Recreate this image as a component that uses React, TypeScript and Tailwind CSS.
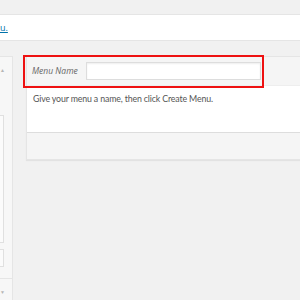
import React from "react";

export default function App() {
  return (
    <div className="relative w-[300px] h-[300px] overflow-hidden bg-[#f1f1f1] font-['Open_Sans',sans-serif] text-[#444]">
      {/* top strip */}
      <div className="h-[15px] border-b border-[#e5e5e5]"></div>
      <div className="h-[26px] bg-white border-b border-[#e5e5e5] flex items-center">
        <span className="text-[9px] text-[#0073aa] underline leading-none">u.</span>
      </div>

      <div className="flex mt-[15px]">
        {/* left panel, cut off */}
        <div className="w-[13px] h-[260px] shrink-0 bg-[#f7f7f7] border-t border-r border-[#e5e5e5] flex flex-col">
          <div className="h-[58px] pt-[11px]">
            <span className="block text-[5px] leading-none text-[#b5b5b5]">▲</span>
          </div>
          <div className="w-[4px] h-[128px] bg-[#fbfbfb] border-t border-r border-b border-[#e0e0e0]"></div>
          <div className="w-[4px] h-[18px] mt-[6px] bg-[#fbfbfb] border-t border-r border-b border-[#e0e0e0]"></div>
          <div className="mt-[11px] border-t border-[#e5e5e5] pt-[11px]">
            <span className="block text-[5px] leading-none text-[#b5b5b5]">▼</span>
          </div>
        </div>

        {/* menu card */}
        <div className="ml-[13px] w-[300px] shrink-0 self-start bg-white border border-[#e5e5e5] shadow-[0_1px_1px_rgba(0,0,0,0.06)]">
          <div className="h-[29px] bg-[#f5f5f5] border-b border-[#eee] flex items-center pl-[5px]">
            <span className="italic text-[8.5px] text-[#666] w-[54px]">Menu Name</span>
            <div className="w-[175px] h-[18px] bg-white border border-[#ddd] shadow-[inset_0_1px_2px_rgba(0,0,0,0.07)]"></div>
          </div>
          <div className="h-[46px] pl-[6px] pt-[7px] font-['Lato',sans-serif] text-[8.8px] tracking-[-0.15px] text-[#555] leading-tight">
            Give your menu a name, then click Create Menu.
          </div>
          <div className="h-[27px] bg-[#f5f5f5] border-t border-[#ddd]"></div>
        </div>
      </div>

      {/* highlight annotation */}
      <div className="absolute left-[23px] top-[55px] w-[241px] h-[33px] border-2 border-[#ee1111]"></div>
    </div>
  );
}
